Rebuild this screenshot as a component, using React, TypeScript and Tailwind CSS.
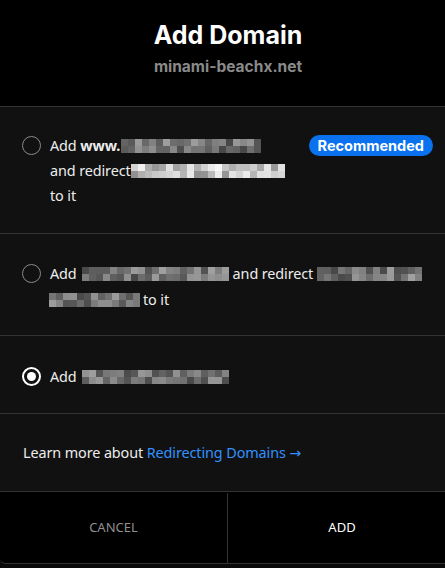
import React from "react";

// blurred-out domain text, drawn as a grey mosaic
const Mosaic: React.FC<{ width: number; seed: number; rows?: number; light?: boolean }> = ({
  width,
  seed,
  rows = 2,
  light = false,
}) => {
  const cols = Math.round(width / 7);
  const cells: string[] = [];
  let s = seed;
  for (let i = 0; i < cols * rows; i++) {
    s = (s * 9301 + 49297) % 233280;
    const r = s / 233280;
    const base = light ? 140 : 70;
    const span = light ? 110 : 90;
    const v = Math.round(base + r * span);
    cells.push(`rgb(${v},${v},${v})`);
  }
  return (
    <span
      className="inline-grid align-middle"
      style={{ gridTemplateColumns: `repeat(${cols}, 7px)`, gridAutoRows: "7px" }}
    >
      {cells.map((c, i) => (
        <span key={i} style={{ background: c }} />
      ))}
    </span>
  );
};

const Radio: React.FC<{ checked?: boolean }> = ({ checked }) => (
  <span
    className={`mt-[3px] flex h-[19px] w-[19px] shrink-0 items-center justify-center rounded-full ${
      checked ? "border-2 border-white" : "border-[1.5px] border-[#8a8a8a]"
    }`}
  >
    {checked && <span className="h-[9px] w-[9px] rounded-full bg-white" />}
  </span>
);

export default function App() {
  return (
    <div className="h-[568px] w-[445px] overflow-hidden bg-[#0a0a0a] font-['Noto_Sans',sans-serif] text-[#ededed]">
      <div className="w-[456px] overflow-hidden rounded-b-md border-b border-[#333]">
        <header className="flex h-[106px] flex-col items-center bg-black pt-[18px]">
          <h1 className="font-['Inter',sans-serif] text-[25px] font-bold leading-[34px] text-white">
            Add Domain
          </h1>
          <p className="mt-[3px] font-['Inter',sans-serif] text-[15.5px] font-bold text-[#8a8a8a]">
            minami-beachx.net
          </p>
        </header>

        <div className="border-t border-[#333] bg-[#111] text-[14.4px] tracking-[-0.1px]">
          <label className="flex h-[127px] items-start gap-[9px] border-b border-[#333] pl-[22px] pr-[23px] pt-[26px]">
            <Radio />
            <div className="flex-1 leading-[25px]">
              <div className="flex items-center">
                <span className="mr-[1px]">
                  Add <b className="font-bold">www.</b>
                </span>
                <Mosaic width={143} seed={3} />
                <span className="ml-auto rounded-full bg-[#0a72ef] px-[9px] font-['Inter',sans-serif] text-[14.5px] font-bold leading-[21px] tracking-normal text-white">
                  Recommended
                </span>
              </div>
              <div className="flex items-center">
                <span>and redirect</span>
                <Mosaic width={154} seed={11} light />
              </div>
              <div>to it</div>
            </div>
          </label>

          <label className="flex h-[102px] items-start gap-[9px] border-b border-[#333] pl-[22px] pr-[23px] pt-[27px]">
            <Radio />
            <div className="flex-1 leading-[26px]">
              <div className="flex items-center">
                <span className="mr-[5px]">Add</span>
                <Mosaic width={147} seed={21} />
                <span className="mx-[4px]">and redirect</span>
                <Mosaic width={105} seed={27} />
              </div>
              <div className="-ml-[1px] flex items-center">
                <Mosaic width={91} seed={33} />
                <span className="ml-[3px]">to it</span>
              </div>
            </div>
          </label>

          <label className="flex h-[78px] items-start gap-[9px] border-b border-[#333] pl-[22px] pr-[23px] pt-[28px]">
            <Radio checked />
            <div className="flex items-center leading-[25px]">
              <span className="mr-[5px]">Add</span>
              <Mosaic width={147} seed={41} />
            </div>
          </label>

          <div className="flex h-[78px] items-center border-b border-[#333] pl-[23px]">
            Learn more about&nbsp;
            <span className="text-[#3291ff]">
              Redirecting Domains <span className="font-['DejaVu_Sans',sans-serif] text-[14px]">→</span>
            </span>
          </div>
        </div>

        <footer className="grid h-[71px] grid-cols-[228px_1fr] bg-black pt-[1px] text-[13px]">
          <button className="border-r border-[#333] text-[#8f8f8f]">CANCEL</button>
          <button className="text-white">ADD</button>
        </footer>
      </div>
    </div>
  );
}
